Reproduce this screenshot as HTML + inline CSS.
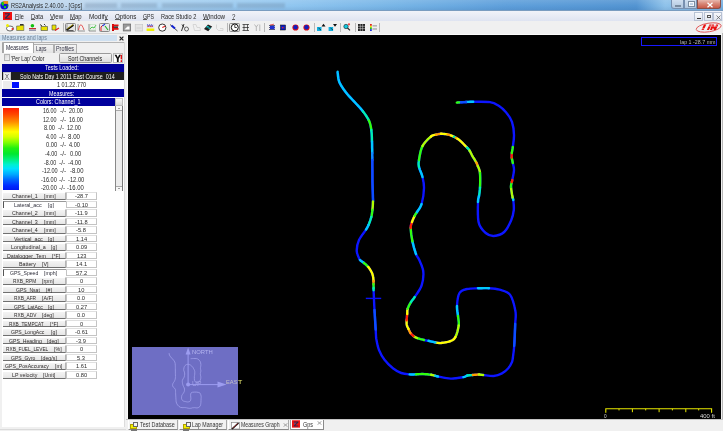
<!DOCTYPE html>
<html><head><meta charset="utf-8">
<style>
*{margin:0;padding:0;box-sizing:border-box}
html,body{width:723px;height:431px;overflow:hidden;background:#f0f0f0;font-family:"Liberation Sans",sans-serif;font-size:6.5px;color:#000;position:relative}
.a{position:absolute}
.t{position:absolute;white-space:nowrap;line-height:1}
#title{left:0;top:0;width:723px;height:11px;background:linear-gradient(rgba(255,255,255,.12),rgba(255,255,255,0) 60%,rgba(0,30,80,.08)),linear-gradient(90deg,#c2d6ea 0%,#bcd6ee 11%,#acd2f0 20%,#90c6f0 40%,#76b4e6 55%,#5e9fdb 70%,#5294d2 88%,#8ec2ea 92%,#7ab2e2 100%);border-bottom:1px solid #7a9cc0}
#menu{left:0;top:11px;width:723px;height:10px;background:linear-gradient(#f1f3f9,#dfe4f1)}
#tool{left:0;top:21px;width:723px;height:14px;background:#f0f0f0}
#black{left:128px;top:35px;width:593px;height:384px;background:#000}
.mi{top:12.5px;font-size:7px;color:#333;letter-spacing:-0.1px}
.ic{position:absolute;top:24px;width:8px;height:7px}
.sep{position:absolute;top:23px;width:1px;height:9px;background:#a0a0a0;border-right:1px solid #fff}
.press{position:absolute;top:23px;height:9px;border:1px solid #888;border-radius:1px;background:#e4e4e4}
.lab{position:absolute;left:3px;width:63px;height:7.5px;background:#ececec;border-bottom:1px solid #777;border-right:1px solid #aaa;border-top:1px solid #fff}
.val{position:absolute;left:66px;width:31px;height:7.5px;background:#fff;border:1px solid #bdbdbd;border-top:0}
.lt{position:absolute;font-size:6px;color:#222;letter-spacing:-0.15px;line-height:1;white-space:nowrap}
.lg{position:absolute;font-size:6px;color:#222;letter-spacing:-0.15px;line-height:1;white-space:nowrap}
</style></head><body>
<div id="title" class="a"></div>
<svg class="a" style="left:0;top:0" width="10" height="11" viewBox="0 0 10 11"><circle cx="4.3" cy="5.4" r="4" fill="#0a10d8"/><rect x="3" y="1.1" width="5.1" height="2.8" fill="#f08a10"/><path d="M1 3.5l1.5-1.8 1.2.5.3 2.5-1 1.5z" fill="#10d010"/><circle cx="5" cy="7.1" r="1.2" fill="#10e010"/><path d="M7 4.5h1.2v2h-1.2z" fill="#109020"/></svg>
<div class="a" style="left:85px;top:3px;width:32px;height:5px;background:rgba(110,130,155,.3);filter:blur(1px)"></div>
<div class="a" style="left:121px;top:3px;width:36px;height:5px;background:rgba(110,130,155,.3);filter:blur(1px)"></div>
<div class="a" style="left:162px;top:3px;width:71px;height:5px;background:rgba(110,130,155,.3);filter:blur(1px)"></div>
<div class="a" style="left:237px;top:3px;width:48px;height:5px;background:rgba(110,130,155,.3);filter:blur(1px)"></div>
<div class="a" style="left:671px;top:0;width:13px;height:9px;background:linear-gradient(#d0dff0,#b0c6de);border:1px solid #7890b0;border-top:0;border-radius:0 0 0 3px"><div class="a" style="left:3px;top:4.5px;width:6px;height:2px;background:#f4f8fc;border:0.5px solid #7a8ca0"></div></div>
<div class="a" style="left:684px;top:0;width:13px;height:9px;background:linear-gradient(#d0dff0,#b0c6de);border:1px solid #7890b0;border-top:0"><div class="a" style="left:3.5px;top:1.5px;width:5px;height:4.5px;border:1px solid #f4f8fc;outline:0.5px solid #7a8ca0"></div></div>
<div class="a" style="left:697px;top:0;width:24px;height:9px;background:linear-gradient(#e8b8ae,#d88878 45%,#c85a48);border:1px solid #8a5048;border-top:0;border-radius:0 0 3px 0"><svg class="a" style="left:7.5px;top:1.5px" width="8" height="6" viewBox="0 0 8 6"><path d="M1.5 .7L6.5 5.3M6.5 .7L1.5 5.3" stroke="#fff" stroke-width="1.2"/></svg></div>

<div id="menu" class="a"></div>
<svg class="a" style="left:3px;top:11.5px" width="9" height="8" viewBox="0 0 9 8"><rect width="9" height="8" fill="#f01010"/><path d="M2 1.8h5M1.8 6.2h5M6.5 2L2.5 6" stroke="#2a2a50" stroke-width="1.1" fill="none"/><circle cx="3" cy="3.5" r=".8" fill="#3a5a9a"/></svg>
<div class="a" style="left:694px;top:12px;width:9px;height:8.5px;background:linear-gradient(#f8f9fc,#e0e5ef);border:1px solid #b8c2d4"><div class="a" style="left:2px;top:5px;width:4px;height:1px;background:#333"></div></div>
<div class="a" style="left:703.5px;top:12px;width:9px;height:8.5px;background:linear-gradient(#f8f9fc,#e0e5ef);border:1px solid #b8c2d4"><div class="a" style="left:2.5px;top:1.5px;width:4px;height:3.5px;border:1px solid #555"></div></div>
<div class="a" style="left:713px;top:12px;width:9px;height:8.5px;background:linear-gradient(#f8f9fc,#e0e5ef);border:1px solid #b8c2d4"><svg class="a" style="left:1.5px;top:1.5px" width="5" height="5" viewBox="0 0 5 5"><path d="M.5 .5L4.5 4.5M4.5 .5L.5 4.5" stroke="#555" stroke-width=".7"/></svg></div>

<div class="a" style="left:15.0px;top:19px;width:3.8px;height:0.9px;background:#606060"></div><div class="a" style="left:31.0px;top:19px;width:4.2px;height:0.9px;background:#606060"></div><div class="a" style="left:49.8px;top:19px;width:4.4px;height:0.9px;background:#606060"></div><div class="a" style="left:70.0px;top:19px;width:5.2px;height:0.9px;background:#606060"></div><div class="a" style="left:104.5px;top:19px;width:3.0px;height:0.9px;background:#606060"></div><div class="a" style="left:115.0px;top:19px;width:5.0px;height:0.9px;background:#606060"></div><div class="a" style="left:142.8px;top:19px;width:4.4px;height:0.9px;background:#606060"></div><div class="a" style="left:203.3px;top:19px;width:6.2px;height:0.9px;background:#606060"></div><div class="a" style="left:232.0px;top:19px;width:3.4px;height:0.9px;background:#606060"></div>
<div id="tool" class="a"></div>
<div class="a" style="left:64.7px;top:23.0px;width:11.1px;height:9.0px;border:1px solid #8a8a8a;border-radius:1.5px;background:linear-gradient(#ececec,#e2e2e2)"></div>
<div class="a" style="left:99.3px;top:23.0px;width:10.5px;height:9.0px;border:1px solid #8a8a8a;border-radius:1.5px;background:linear-gradient(#ececec,#e2e2e2)"></div>
<div class="a" style="left:229.3px;top:23.0px;width:11.1px;height:9.0px;border:1px solid #8a8a8a;border-radius:1.5px;background:linear-gradient(#ececec,#e2e2e2)"></div>
<div class="a" style="left:62.5px;top:23.0px;width:1.0px;height:9.0px;background:#b8b8b8"></div>
<div class="a" style="left:227.4px;top:23.0px;width:1.0px;height:9.0px;background:#b8b8b8"></div>
<div class="a" style="left:264.0px;top:23.0px;width:1.0px;height:9.0px;background:#b8b8b8"></div>
<div class="a" style="left:314.0px;top:23.0px;width:1.0px;height:9.0px;background:#b8b8b8"></div>
<div class="a" style="left:340.4px;top:23.0px;width:1.0px;height:9.0px;background:#b8b8b8"></div>
<div class="a" style="left:354.5px;top:23.0px;width:1.0px;height:9.0px;background:#b8b8b8"></div>
<div class="a" style="left:379.4px;top:23.0px;width:1.0px;height:9.0px;background:#b8b8b8"></div>
<svg class="a" style="left:0;top:0" width="400" height="36" viewBox="0 0 400 36"><ellipse cx="10" cy="28.5" rx="3.5" ry="2.5" fill="#fff" stroke="#444" stroke-width=".8"/><circle cx="7.5" cy="25.5" r="1.5" fill="#ee0"/><circle cx="12.5" cy="29" r="1" fill="#e22"/><path d="M16.6 26h3l1-1h3.2v5.5h-7.2z" fill="#e8e000" stroke="#555" stroke-width=".6"/><rect x="20" y="24" width="3.5" height="1.5" fill="#333"/><circle cx="32.4" cy="25.8" r="1.8" fill="#10c010"/><rect x="29" y="28" width="7" height="1.2" fill="#c03030"/><rect x="29" y="29.6" width="7" height="1.2" fill="#8080a0"/><path d="M41 26.5h6.5v4h-6.5z" fill="#e8e000" stroke="#444" stroke-width=".6"/><path d="M40 24.5l2 1.5M44 24l1.5 1.5" stroke="#222" stroke-width=".9"/><path d="M52 25h4v5h-4z" fill="#e8e000" stroke="#444" stroke-width=".6"/><path d="M55 30.5l4-2.5" stroke="#e02020" stroke-width="1.2"/><path d="M66.5 30l7-5" stroke="#000" stroke-width="1.6"/><path d="M67 29l6-4.5" stroke="#e8d000" stroke-width=".7"/><path d="M66.5 30.5h7" stroke="#222" stroke-width=".7"/><path d="M67 24v6" stroke="#555" stroke-width=".5"/><path d="M78 31h7M78 24v7" stroke="#555" stroke-width=".6"/><path d="M78.5 30c1.5-7 3-7 5.5 0" fill="none" stroke="#e03030" stroke-width=".8"/><path d="M89 31h7M89 24v7" stroke="#555" stroke-width=".6"/><path d="M90 29l2-2 2 1 2-3" fill="none" stroke="#30c030" stroke-width=".9"/><rect x="90" y="24.5" width="5.5" height="5.5" fill="none" stroke="#a0d0a0" stroke-width=".4"/><path d="M101 31v-4l2-2" stroke="#e02020" stroke-width="1" fill="none"/><path d="M102.5 26l2.5-2" stroke="#2040e0" stroke-width="1.1"/><path d="M105 26l3 4" stroke="#20b020" stroke-width="1.1"/><rect x="112" y="24" width="2" height="7" fill="#c00"/><rect x="112" y="24.5" width="6.5" height="1.8" fill="#e01010"/><rect x="112" y="28" width="6.5" height="1.8" fill="#e01010"/><rect x="114" y="26.3" width="4" height="1.7" fill="#404040"/><rect x="123.2" y="24" width="7.5" height="7" fill="#9a9a9a" stroke="#606060" stroke-width=".6"/><path d="M124.5 29.5h5v-3h-2z" fill="#fff"/><rect x="135.2" y="24.5" width="7.5" height="6.5" fill="#e4e4e4" stroke="#c4c4c4" stroke-width=".6"/><path d="M136.5 28h5" stroke="#ccc" stroke-width=".8"/><rect x="146.6" y="24" width="7.7" height="4" fill="#e0e0f0"/><path d="M147 24.5h1v1h-1zM149 24.5h1v1h-1zM151 24.5h1v1h-1zM148 25.5h1v1h-1zM150 25.5h1v1h-1zM152 25.5h1v1h-1z" fill="#2030c0"/><path d="M147 26.8l2 -.8 2 .8 2-.8" stroke="#e02020" stroke-width=".6" fill="none"/><rect x="146.6" y="28.5" width="7.7" height="2.5" fill="#f0f000"/><circle cx="162.3" cy="27.6" r="3.6" fill="#fff" stroke="#222" stroke-width=".9"/><path d="M162.3 27.6l2.8-1.3" stroke="#e02020" stroke-width="1.1"/><path d="M170 24.5l7.5 6.5" stroke="#222" stroke-width=".8"/><path d="M171.5 25.5l3.5 3" stroke="#1020d0" stroke-width="2"/><path d="M182 24.5l2 3M184 24l-1.5 4M182.5 28l-1 3" stroke="#222" stroke-width=".9"/><circle cx="186.5" cy="29" r="2" fill="none" stroke="#555" stroke-width=".9"/><path d="M193 24.5h3l1 3h3l.5 3h-6z" fill="none" stroke="#cfcfcf" stroke-width=".8"/><path d="M204 29l4-4.5 4.2 2-4 4.8z" fill="#202020"/><rect x="206.5" y="26" width="2.2" height="1.6" fill="#10c0c0"/><rect x="208.5" y="27.5" width="2" height="1.4" fill="#10c0c0"/><path d="M216.5 24.5v4l2 2h4.5v-2h-3" fill="none" stroke="#cfcfcf" stroke-width=".8"/><circle cx="234.8" cy="27.5" r="3.5" fill="#fff" stroke="#111" stroke-width="1"/><path d="M234.8 25v2.5h2" stroke="#111" stroke-width=".8" fill="none"/><path d="M242.5 24.5h6.5M242.5 30.5h6.5M244 24.5v6M247.5 24.5v6M242.5 27.5h6.5" stroke="#222" stroke-width=".7"/><path d="M254.5 24.5l1.8 2.5 1.8-2.5M256.3 27v4M259.8 24.5v6.5" stroke="#b0b0b0" stroke-width=".9" fill="none"/><path d="M269 25.5h6M269 27.5h6M269 29.5h6" stroke="#303060" stroke-width=".8"/><path d="M270 25l4 -.8" stroke="#e02020" stroke-width=".7"/><rect x="270" y="26" width="4.5" height="3" fill="#2030d0"/><rect x="280.5" y="25" width="5" height="5" fill="#1020c0" stroke="#000" stroke-width=".5"/><rect x="282" y="27" width="1.5" height="1.3" fill="#e02020"/><circle cx="295.5" cy="27.5" r="3.1" fill="#e01010"/><circle cx="295.5" cy="27.2" r="2.2" fill="#1020c0"/><circle cx="306.5" cy="27.5" r="3.1" fill="#e01010"/><circle cx="306.5" cy="27.2" r="2.2" fill="#1020c0"/><rect x="317" y="27" width="4.5" height="4" fill="#10b0e0"/><path d="M321 30l-2.5-2" stroke="#000" stroke-width=".6"/><path d="M321.5 26.5l2-2.8 2 2.8z" fill="#111"/><rect x="328.6" y="27" width="4.5" height="4" fill="#10b0e0"/><path d="M333 30l-2.5-2" stroke="#000" stroke-width=".6"/><path d="M333 24h4l-2 2.8z" fill="#111"/><circle cx="346" cy="26.5" r="2.2" fill="#10c8e0" stroke="#222" stroke-width=".6"/><path d="M347.5 28l2.5 2.3" stroke="#222" stroke-width="1.1"/><circle cx="349" cy="24.3" r="1.1" fill="#f04040"/><rect x="358" y="24" width="7" height="7" fill="#222"/><path d="M360.3 24v7M362.6 24v7M358 26.3h7M358 28.6h7" stroke="#ddd" stroke-width=".5"/><rect x="370" y="24" width="1.8" height="1.8" fill="#e02020"/><rect x="370" y="25.8" width="1.8" height="1.8" fill="#f0e000"/><rect x="370" y="27.4" width="1.8" height="1.8" fill="#20c020"/><rect x="370" y="29.2" width="1.8" height="1.8" fill="#2030e0"/><rect x="372.5" y="25" width="4.5" height="1.6" fill="#b4b4b4"/><rect x="372.5" y="28.2" width="4.5" height="1.6" fill="#b4b4b4"/></svg>
<!-- AIM logo -->
<svg class="a" style="left:690px;top:20px" width="33" height="16" viewBox="0 0 33 16">
<ellipse cx="18.7" cy="7.5" rx="12.6" ry="4.3" transform="rotate(-9 18.7 7.5)" fill="none" stroke="#e05050" stroke-width=".9"/>
<path d="M11.5 10h2.2l2.6-5.5h-2.4zM16.8 10h2.2l2.6-5.5h-2.2zM20 10h2l1-2.2 1 2.2 1.8-.1 2.6-5.4h-2.3l-1.3 2.8-.9-2.8h-2z" fill="#e81010"/>
<path d="M12 8.7h5M17 6h10" stroke="#fff" stroke-width=".5"/>
</svg>

<!-- left panel -->
<div class="a" style="left:0;top:33px;width:127px;height:1px;background:#d8d8d8"></div>
<div class="a" style="left:0;top:35px;width:117px;height:6px;background:#cfe0f0"></div>
<svg class="a" style="left:119px;top:36px" width="5" height="5" viewBox="0 0 5 5"><path d="M.6 .6L4.4 4.4M4.4 .6L.6 4.4" stroke="#222" stroke-width="1.2"/></svg>
<div class="a" style="left:1.5px;top:42px;width:1px;height:385px;background:#a4a4a4"></div><div class="a" style="left:0;top:428.5px;width:126px;height:1px;background:#dadada"></div>
<div class="a" style="left:2px;top:42px;width:122px;height:1px;background:#b4b4b4"></div>
<div class="a" style="left:123.5px;top:42px;width:1px;height:385px;background:#dcdcdc"></div>
<div class="a" style="left:126.5px;top:35px;width:1.5px;height:384px;background:#fafafa"></div>
<!-- tabs -->
<div class="a" style="left:2.5px;top:42px;width:31px;height:11px;background:#fff;border:1px solid #a8a8a8;border-bottom:0"></div>
<div class="a" style="left:33.5px;top:44px;width:20px;height:9px;background:linear-gradient(#f4f4f4,#e2e2e2);border:1px solid #b0b0b0;border-bottom:0;border-left:0"></div>
<div class="a" style="left:53.5px;top:44px;width:23px;height:9px;background:linear-gradient(#f4f4f4,#e2e2e2);border:1px solid #b0b0b0;border-bottom:0"></div>
<div class="a" style="left:2px;top:53px;width:121.5px;height:374px;background:#fff"></div>
<div class="a" style="left:2px;top:53px;width:121.5px;height:10.5px;background:#f0f0f0"></div>
<div class="a" style="left:3.5px;top:54.2px;width:6.5px;height:6.8px;background:linear-gradient(135deg,#d8d8d8,#f4f4f4);border:1px solid #b4b4b4"></div>
<div class="a" style="left:58.5px;top:53.3px;width:53.5px;height:9.3px;background:linear-gradient(#f4f4f4,#dedede);border:1px solid #9a9a9a;border-radius:1.5px"></div>
<div class="a" style="left:113px;top:53.3px;width:9.5px;height:9.3px;background:#fff;border:1px solid #bbb"></div>
<svg class="a" style="left:113px;top:53px" width="10" height="10" viewBox="0 0 10 10"><path d="M1.5 1.8h2l1.3 2.6 1.3-2.6h1.9l-2.3 4v3.2h-1.8v-3.2z" fill="#111"/><rect x="7.6" y="1.8" width="1.4" height="4.6" fill="#e01010"/><rect x="7.6" y="7.2" width="1.4" height="1.8" fill="#e01010"/></svg>
<div class="a" style="left:2px;top:63.5px;width:121.5px;height:8.3px;background:#00009c"></div>
<div class="a" style="left:2px;top:71.8px;width:121.5px;height:8.7px;background:#1e1e1e"></div>
<div class="a" style="left:2.5px;top:72.3px;width:8.3px;height:8px;background:#f0f0f0;border:0.5px solid #c8c8c8"></div>
<div class="a" style="left:2.5px;top:81px;width:9px;height:7.5px;background:#ececec"></div>
<div class="a" style="left:11.8px;top:81.7px;width:7px;height:6.3px;background:#0010ff"></div>
<div class="a" style="left:2px;top:89.2px;width:121.5px;height:8.3px;background:#00009c"></div>
<div class="a" style="left:2px;top:97.5px;width:113px;height:8.4px;background:#00009c"></div>
<div class="a" style="left:115px;top:98px;width:7.5px;height:7.5px;background:linear-gradient(#f8f8f8,#d8d8d8);border:1px solid #bbb"></div>
<!-- scrollbar -->
<div class="a" style="left:115px;top:106px;width:8.3px;height:85px;background:#ececec;border-left:1px solid #888;border-right:1.5px solid #777"></div>
<div class="a" style="left:116px;top:106px;width:6px;height:4.5px;background:#f8f8f8;border-bottom:1px solid #aaa"></div>
<div class="a" style="left:118px;top:107.5px;width:0;height:0;border-left:1.3px solid transparent;border-right:1.3px solid transparent;border-top:1.5px solid #444"></div>
<div class="a" style="left:116px;top:185.5px;width:6px;height:5.5px;background:#f8f8f8;border-top:1px solid #aaa"></div>
<div class="a" style="left:118px;top:187.5px;width:0;height:0;border-left:1.3px solid transparent;border-right:1.3px solid transparent;border-bottom:1.5px solid #444"></div>
<!-- color bar -->
<div class="a" style="left:3.2px;top:107.5px;width:15.6px;height:82.5px;background:linear-gradient(#ff1800 0%,#ff4800 8%,#ff8c00 17%,#ffd000 24%,#ffff00 29%,#d8ff00 35%,#80ff00 42%,#20f010 49%,#00e830 56%,#00f080 63%,#00f0d0 69%,#00e0ff 74%,#00a8ff 81%,#0060ff 88%,#0028ff 95%,#0018f0 100%)"></div>
<div class="a" style="left:3px;top:192.00px;width:62.5px;height:7.6px;background:linear-gradient(#f4f4f4,#e6e6e6);border-bottom:1px solid #707070;border-right:1px solid #b4b4b4;border-top:0.5px solid #fff"></div>
<div class="a" style="left:65.8px;top:192.00px;width:31px;height:7.6px;background:#fff;border:1px solid #c4c4c4;border-top-color:#e0e0e0"></div>
<div id="rn0" class="t" style="left:12.21px;top:193.01px;font-size:6px;color:#2e2a2a;transform:scaleX(0.887);transform-origin:0 0">Channel_1</div>
<div id="ru0" class="t" style="left:43.85px;top:193.01px;font-size:6px;color:#2e2a2a;transform:scaleX(0.880);transform-origin:0 0">[mm]</div>
<div id="rv0" class="t" style="left:74.80px;top:193.01px;font-size:6px;color:#2a2a2a;transform:scaleX(0.950);transform-origin:0 0">-28.7</div>
<div class="a" style="left:3px;top:200.52px;width:62.5px;height:7.5px;background:#fff;border-left:1px solid #555;border-top:1px solid #999"></div>
<div class="a" style="left:65.8px;top:200.52px;width:31px;height:7.6px;background:#fff;border:1px solid #c4c4c4;border-top-color:#e0e0e0"></div>
<div id="rn1" class="t" style="left:14.22px;top:201.53px;font-size:6px;color:#2e2e3a;transform:scaleX(0.889);transform-origin:0 0">Lateral_acc</div>
<div id="ru1" class="t" style="left:47.71px;top:201.53px;font-size:6px;color:#2e2e3a;transform:scaleX(0.880);transform-origin:0 0">[g]</div>
<div id="rv1" class="t" style="left:74.80px;top:201.53px;font-size:6px;color:#2a2a2a;transform:scaleX(0.950);transform-origin:0 0">-0.10</div>
<div class="a" style="left:3px;top:209.04px;width:62.5px;height:7.6px;background:linear-gradient(#f4f4f4,#e6e6e6);border-bottom:1px solid #707070;border-right:1px solid #b4b4b4;border-top:0.5px solid #fff"></div>
<div class="a" style="left:65.8px;top:209.04px;width:31px;height:7.6px;background:#fff;border:1px solid #c4c4c4;border-top-color:#e0e0e0"></div>
<div id="rn2" class="t" style="left:12.21px;top:210.05px;font-size:6px;color:#2e2a2a;transform:scaleX(0.887);transform-origin:0 0">Channel_2</div>
<div id="ru2" class="t" style="left:43.85px;top:210.05px;font-size:6px;color:#2e2a2a;transform:scaleX(0.880);transform-origin:0 0">[mm]</div>
<div id="rv2" class="t" style="left:75.01px;top:210.05px;font-size:6px;color:#2a2a2a;transform:scaleX(0.950);transform-origin:0 0">-11.9</div>
<div class="a" style="left:3px;top:217.56px;width:62.5px;height:7.6px;background:linear-gradient(#f4f4f4,#e6e6e6);border-bottom:1px solid #707070;border-right:1px solid #b4b4b4;border-top:0.5px solid #fff"></div>
<div class="a" style="left:65.8px;top:217.56px;width:31px;height:7.6px;background:#fff;border:1px solid #c4c4c4;border-top-color:#e0e0e0"></div>
<div id="rn3" class="t" style="left:12.21px;top:218.57px;font-size:6px;color:#2e2a2a;transform:scaleX(0.887);transform-origin:0 0">Channel_3</div>
<div id="ru3" class="t" style="left:43.85px;top:218.57px;font-size:6px;color:#2e2a2a;transform:scaleX(0.880);transform-origin:0 0">[mm]</div>
<div id="rv3" class="t" style="left:75.01px;top:218.57px;font-size:6px;color:#2a2a2a;transform:scaleX(0.950);transform-origin:0 0">-11.8</div>
<div class="a" style="left:3px;top:226.08px;width:62.5px;height:7.6px;background:linear-gradient(#f4f4f4,#e6e6e6);border-bottom:1px solid #707070;border-right:1px solid #b4b4b4;border-top:0.5px solid #fff"></div>
<div class="a" style="left:65.8px;top:226.08px;width:31px;height:7.6px;background:#fff;border:1px solid #c4c4c4;border-top-color:#e0e0e0"></div>
<div id="rn4" class="t" style="left:12.21px;top:227.09px;font-size:6px;color:#2e2a2a;transform:scaleX(0.887);transform-origin:0 0">Channel_4</div>
<div id="ru4" class="t" style="left:43.85px;top:227.09px;font-size:6px;color:#2e2a2a;transform:scaleX(0.880);transform-origin:0 0">[mm]</div>
<div id="rv4" class="t" style="left:76.39px;top:227.09px;font-size:6px;color:#2a2a2a;transform:scaleX(0.950);transform-origin:0 0">-5.8</div>
<div class="a" style="left:3px;top:234.60px;width:62.5px;height:7.6px;background:linear-gradient(#f4f4f4,#e6e6e6);border-bottom:1px solid #707070;border-right:1px solid #b4b4b4;border-top:0.5px solid #fff"></div>
<div class="a" style="left:65.8px;top:234.60px;width:31px;height:7.6px;background:#fff;border:1px solid #c4c4c4;border-top-color:#e0e0e0"></div>
<div id="rn5" class="t" style="left:13.61px;top:235.61px;font-size:6px;color:#2e2a2a;transform:scaleX(0.890);transform-origin:0 0">Vertical_acc</div>
<div id="ru5" class="t" style="left:48.31px;top:235.61px;font-size:6px;color:#2e2a2a;transform:scaleX(0.880);transform-origin:0 0">[g]</div>
<div id="rv5" class="t" style="left:75.75px;top:235.61px;font-size:6px;color:#2a2a2a;transform:scaleX(0.950);transform-origin:0 0">1.14</div>
<div class="a" style="left:3px;top:243.12px;width:62.5px;height:7.6px;background:linear-gradient(#f4f4f4,#e6e6e6);border-bottom:1px solid #707070;border-right:1px solid #b4b4b4;border-top:0.5px solid #fff"></div>
<div class="a" style="left:65.8px;top:243.12px;width:31px;height:7.6px;background:#fff;border:1px solid #c4c4c4;border-top-color:#e0e0e0"></div>
<div id="rn6" class="t" style="left:10.61px;top:244.13px;font-size:6px;color:#2e2a2a;transform:scaleX(0.891);transform-origin:0 0">Longitudinal_a</div>
<div id="ru6" class="t" style="left:51.32px;top:244.13px;font-size:6px;color:#2e2a2a;transform:scaleX(0.880);transform-origin:0 0">[g]</div>
<div id="rv6" class="t" style="left:75.75px;top:244.13px;font-size:6px;color:#2a2a2a;transform:scaleX(0.950);transform-origin:0 0">0.09</div>
<div class="a" style="left:3px;top:251.64px;width:62.5px;height:7.6px;background:linear-gradient(#f4f4f4,#e6e6e6);border-bottom:1px solid #707070;border-right:1px solid #b4b4b4;border-top:0.5px solid #fff"></div>
<div class="a" style="left:65.8px;top:251.64px;width:31px;height:7.6px;background:#fff;border:1px solid #c4c4c4;border-top-color:#e0e0e0"></div>
<div id="rn7" class="t" style="left:7.37px;top:252.65px;font-size:6px;color:#2e2a2a;transform:scaleX(0.883);transform-origin:0 0">Datalogger_Tem</div>
<div id="ru7" class="t" style="left:52.15px;top:252.65px;font-size:6px;color:#2e2a2a;transform:scaleX(0.880);transform-origin:0 0">[°F]</div>
<div id="rv7" class="t" style="left:76.54px;top:252.65px;font-size:6px;color:#2a2a2a;transform:scaleX(0.950);transform-origin:0 0">123</div>
<div class="a" style="left:3px;top:260.16px;width:62.5px;height:7.6px;background:linear-gradient(#f4f4f4,#e6e6e6);border-bottom:1px solid #707070;border-right:1px solid #b4b4b4;border-top:0.5px solid #fff"></div>
<div class="a" style="left:65.8px;top:260.16px;width:31px;height:7.6px;background:#fff;border:1px solid #c4c4c4;border-top-color:#e0e0e0"></div>
<div id="rn8" class="t" style="left:19.32px;top:261.17px;font-size:6px;color:#2e2a2a;transform:scaleX(0.883);transform-origin:0 0">Battery</div>
<div id="ru8" class="t" style="left:42.01px;top:261.17px;font-size:6px;color:#2e2a2a;transform:scaleX(0.880);transform-origin:0 0">[V]</div>
<div id="rv8" class="t" style="left:75.75px;top:261.17px;font-size:6px;color:#2a2a2a;transform:scaleX(0.950);transform-origin:0 0">14.1</div>
<div class="a" style="left:3px;top:268.68px;width:62.5px;height:7.5px;background:#fff;border-left:1px solid #555;border-top:1px solid #999"></div>
<div class="a" style="left:65.8px;top:268.68px;width:31px;height:7.6px;background:#fff;border:1px solid #c4c4c4;border-top-color:#e0e0e0"></div>
<div id="rn9" class="t" style="left:10.22px;top:269.69px;font-size:6px;color:#2e2e3a;transform:scaleX(0.847);transform-origin:0 0">GPS_Speed</div>
<div id="ru9" class="t" style="left:44.37px;top:269.69px;font-size:6px;color:#2e2e3a;transform:scaleX(0.880);transform-origin:0 0">[mph]</div>
<div id="rv9" class="t" style="left:75.75px;top:269.69px;font-size:6px;color:#2a2a2a;transform:scaleX(0.950);transform-origin:0 0">57.2</div>
<div class="a" style="left:3px;top:277.20px;width:62.5px;height:7.6px;background:linear-gradient(#f4f4f4,#e6e6e6);border-bottom:1px solid #707070;border-right:1px solid #b4b4b4;border-top:0.5px solid #fff"></div>
<div class="a" style="left:65.8px;top:277.20px;width:31px;height:7.6px;background:#fff;border:1px solid #c4c4c4;border-top-color:#e0e0e0"></div>
<div id="rn10" class="t" style="left:13.37px;top:278.21px;font-size:6px;color:#2e2a2a;transform:scaleX(0.797);transform-origin:0 0">RXB_RPM</div>
<div id="ru10" class="t" style="left:42.40px;top:278.21px;font-size:6px;color:#2e2a2a;transform:scaleX(0.880);transform-origin:0 0">[rpm]</div>
<div id="rv10" class="t" style="left:79.71px;top:278.21px;font-size:6px;color:#2a2a2a;transform:scaleX(0.950);transform-origin:0 0">0</div>
<div class="a" style="left:3px;top:285.72px;width:62.5px;height:7.6px;background:linear-gradient(#f4f4f4,#e6e6e6);border-bottom:1px solid #707070;border-right:1px solid #b4b4b4;border-top:0.5px solid #fff"></div>
<div class="a" style="left:65.8px;top:285.72px;width:31px;height:7.6px;background:#fff;border:1px solid #c4c4c4;border-top-color:#e0e0e0"></div>
<div id="rn11" class="t" style="left:16.10px;top:286.73px;font-size:6px;color:#2e2a2a;transform:scaleX(0.840);transform-origin:0 0">GPS_Nsat</div>
<div id="ru11" class="t" style="left:45.83px;top:286.73px;font-size:6px;color:#2e2a2a;transform:scaleX(0.880);transform-origin:0 0">[#]</div>
<div id="rv11" class="t" style="left:78.12px;top:286.73px;font-size:6px;color:#2a2a2a;transform:scaleX(0.950);transform-origin:0 0">10</div>
<div class="a" style="left:3px;top:294.24px;width:62.5px;height:7.6px;background:linear-gradient(#f4f4f4,#e6e6e6);border-bottom:1px solid #707070;border-right:1px solid #b4b4b4;border-top:0.5px solid #fff"></div>
<div class="a" style="left:65.8px;top:294.24px;width:31px;height:7.6px;background:#fff;border:1px solid #c4c4c4;border-top-color:#e0e0e0"></div>
<div id="rn12" class="t" style="left:14.34px;top:295.25px;font-size:6px;color:#2e2a2a;transform:scaleX(0.797);transform-origin:0 0">RXB_AFR</div>
<div id="ru12" class="t" style="left:42.31px;top:295.25px;font-size:6px;color:#2e2a2a;transform:scaleX(0.880);transform-origin:0 0">[A/F]</div>
<div id="rv12" class="t" style="left:77.34px;top:295.25px;font-size:6px;color:#2a2a2a;transform:scaleX(0.950);transform-origin:0 0">0.0</div>
<div class="a" style="left:3px;top:302.76px;width:62.5px;height:7.6px;background:linear-gradient(#f4f4f4,#e6e6e6);border-bottom:1px solid #707070;border-right:1px solid #b4b4b4;border-top:0.5px solid #fff"></div>
<div class="a" style="left:65.8px;top:302.76px;width:31px;height:7.6px;background:#fff;border:1px solid #c4c4c4;border-top-color:#e0e0e0"></div>
<div id="rn13" class="t" style="left:13.58px;top:303.77px;font-size:6px;color:#2e2a2a;transform:scaleX(0.840);transform-origin:0 0">GPS_LatAcc</div>
<div id="ru13" class="t" style="left:48.35px;top:303.77px;font-size:6px;color:#2e2a2a;transform:scaleX(0.880);transform-origin:0 0">[g]</div>
<div id="rv13" class="t" style="left:75.75px;top:303.77px;font-size:6px;color:#2a2a2a;transform:scaleX(0.950);transform-origin:0 0">0.27</div>
<div class="a" style="left:3px;top:311.28px;width:62.5px;height:7.6px;background:linear-gradient(#f4f4f4,#e6e6e6);border-bottom:1px solid #707070;border-right:1px solid #b4b4b4;border-top:0.5px solid #fff"></div>
<div class="a" style="left:65.8px;top:311.28px;width:31px;height:7.6px;background:#fff;border:1px solid #c4c4c4;border-top-color:#e0e0e0"></div>
<div id="rn14" class="t" style="left:13.91px;top:312.29px;font-size:6px;color:#2e2a2a;transform:scaleX(0.797);transform-origin:0 0">RXB_ADV</div>
<div id="ru14" class="t" style="left:42.14px;top:312.29px;font-size:6px;color:#2e2a2a;transform:scaleX(0.880);transform-origin:0 0">[deg]</div>
<div id="rv14" class="t" style="left:77.34px;top:312.29px;font-size:6px;color:#2a2a2a;transform:scaleX(0.950);transform-origin:0 0">0.0</div>
<div class="a" style="left:3px;top:319.80px;width:62.5px;height:7.6px;background:linear-gradient(#f4f4f4,#e6e6e6);border-bottom:1px solid #707070;border-right:1px solid #b4b4b4;border-top:0.5px solid #fff"></div>
<div class="a" style="left:65.8px;top:319.80px;width:31px;height:7.6px;background:#fff;border:1px solid #c4c4c4;border-top-color:#e0e0e0"></div>
<div id="rn15" class="t" style="left:9.45px;top:320.81px;font-size:6px;color:#2e2a2a;transform:scaleX(0.791);transform-origin:0 0">RXB_TEMPCAT</div>
<div id="ru15" class="t" style="left:50.07px;top:320.81px;font-size:6px;color:#2e2a2a;transform:scaleX(0.880);transform-origin:0 0">[°F]</div>
<div id="rv15" class="t" style="left:79.71px;top:320.81px;font-size:6px;color:#2a2a2a;transform:scaleX(0.950);transform-origin:0 0">0</div>
<div class="a" style="left:3px;top:328.32px;width:62.5px;height:7.6px;background:linear-gradient(#f4f4f4,#e6e6e6);border-bottom:1px solid #707070;border-right:1px solid #b4b4b4;border-top:0.5px solid #fff"></div>
<div class="a" style="left:65.8px;top:328.32px;width:31px;height:7.6px;background:#fff;border:1px solid #c4c4c4;border-top-color:#e0e0e0"></div>
<div id="rn16" class="t" style="left:11.38px;top:329.33px;font-size:6px;color:#2e2a2a;transform:scaleX(0.845);transform-origin:0 0">GPS_LongAcc</div>
<div id="ru16" class="t" style="left:50.55px;top:329.33px;font-size:6px;color:#2e2a2a;transform:scaleX(0.880);transform-origin:0 0">[g]</div>
<div id="rv16" class="t" style="left:74.80px;top:329.33px;font-size:6px;color:#2a2a2a;transform:scaleX(0.950);transform-origin:0 0">-0.61</div>
<div class="a" style="left:3px;top:336.84px;width:62.5px;height:7.6px;background:linear-gradient(#f4f4f4,#e6e6e6);border-bottom:1px solid #707070;border-right:1px solid #b4b4b4;border-top:0.5px solid #fff"></div>
<div class="a" style="left:65.8px;top:336.84px;width:31px;height:7.6px;background:#fff;border:1px solid #c4c4c4;border-top-color:#e0e0e0"></div>
<div id="rn17" class="t" style="left:8.65px;top:337.85px;font-size:6px;color:#2e2a2a;transform:scaleX(0.856);transform-origin:0 0">GPS_Heading</div>
<div id="ru17" class="t" style="left:47.40px;top:337.85px;font-size:6px;color:#2e2a2a;transform:scaleX(0.880);transform-origin:0 0">[deg]</div>
<div id="rv17" class="t" style="left:76.39px;top:337.85px;font-size:6px;color:#2a2a2a;transform:scaleX(0.950);transform-origin:0 0">-3.9</div>
<div class="a" style="left:3px;top:345.36px;width:62.5px;height:7.6px;background:linear-gradient(#f4f4f4,#e6e6e6);border-bottom:1px solid #707070;border-right:1px solid #b4b4b4;border-top:0.5px solid #fff"></div>
<div class="a" style="left:65.8px;top:345.36px;width:31px;height:7.6px;background:#fff;border:1px solid #c4c4c4;border-top-color:#e0e0e0"></div>
<div id="rn18" class="t" style="left:6.00px;top:346.37px;font-size:6px;color:#2e2a2a;transform:scaleX(0.797);transform-origin:0 0">RXB_FUEL_LEVEL</div>
<div id="ru18" class="t" style="left:54.17px;top:346.37px;font-size:6px;color:#2e2a2a;transform:scaleX(0.880);transform-origin:0 0">[%]</div>
<div id="rv18" class="t" style="left:79.71px;top:346.37px;font-size:6px;color:#2a2a2a;transform:scaleX(0.950);transform-origin:0 0">0</div>
<div class="a" style="left:3px;top:353.88px;width:62.5px;height:7.6px;background:linear-gradient(#f4f4f4,#e6e6e6);border-bottom:1px solid #707070;border-right:1px solid #b4b4b4;border-top:0.5px solid #fff"></div>
<div class="a" style="left:65.8px;top:353.88px;width:31px;height:7.6px;background:#fff;border:1px solid #c4c4c4;border-top-color:#e0e0e0"></div>
<div id="rn19" class="t" style="left:10.84px;top:354.89px;font-size:6px;color:#2e2a2a;transform:scaleX(0.840);transform-origin:0 0">GPS_Gyro</div>
<div id="ru19" class="t" style="left:41.11px;top:354.89px;font-size:6px;color:#2e2a2a;transform:scaleX(0.880);transform-origin:0 0">[deg/s]</div>
<div id="rv19" class="t" style="left:77.34px;top:354.89px;font-size:6px;color:#2a2a2a;transform:scaleX(0.950);transform-origin:0 0">5.3</div>
<div class="a" style="left:3px;top:362.40px;width:62.5px;height:7.6px;background:linear-gradient(#f4f4f4,#e6e6e6);border-bottom:1px solid #707070;border-right:1px solid #b4b4b4;border-top:0.5px solid #fff"></div>
<div class="a" style="left:65.8px;top:362.40px;width:31px;height:7.6px;background:#fff;border:1px solid #c4c4c4;border-top-color:#e0e0e0"></div>
<div id="rn20" class="t" style="left:5.34px;top:363.41px;font-size:6px;color:#2e2a2a;transform:scaleX(0.860);transform-origin:0 0">GPS_PosAccuracy</div>
<div id="ru20" class="t" style="left:55.12px;top:363.41px;font-size:6px;color:#2e2a2a;transform:scaleX(0.880);transform-origin:0 0">[m]</div>
<div id="rv20" class="t" style="left:75.75px;top:363.41px;font-size:6px;color:#2a2a2a;transform:scaleX(0.950);transform-origin:0 0">1.61</div>
<div class="a" style="left:3px;top:370.92px;width:62.5px;height:7.6px;background:linear-gradient(#f4f4f4,#e6e6e6);border-bottom:1px solid #707070;border-right:1px solid #b4b4b4;border-top:0.5px solid #fff"></div>
<div class="a" style="left:65.8px;top:370.92px;width:31px;height:7.6px;background:#fff;border:1px solid #c4c4c4;border-top-color:#e0e0e0"></div>
<div id="rn21" class="t" style="left:12.09px;top:371.93px;font-size:6px;color:#2e2a2a;transform:scaleX(0.878);transform-origin:0 0">LP velocity</div>
<div id="ru21" class="t" style="left:43.38px;top:371.93px;font-size:6px;color:#2e2a2a;transform:scaleX(0.880);transform-origin:0 0">[Unit]</div>
<div id="rv21" class="t" style="left:75.75px;top:371.93px;font-size:6px;color:#2a2a2a;transform:scaleX(0.950);transform-origin:0 0">0.80</div>

<div class="a" style="left:128px;top:34px;width:595px;height:1px;background:#fbfbfb"></div>
<div id="black" class="a"></div>
<div class="a" style="left:721.5px;top:33px;width:1.5px;height:386px;background:#b8b8b8"></div>
<svg class="a" style="left:0;top:0" width="723" height="431" viewBox="0 0 723 431"><defs><filter id="sf" x="-5%" y="-5%" width="110%" height="110%"><feGaussianBlur stdDeviation="0.35"/></filter></defs><g filter="url(#sf)"><path d="M337.6 71.8 C337.9 73.5 337.9 78.5 339.3 82.0 C340.7 85.5 343.3 89.0 346.0 92.5 C348.7 96.0 352.7 99.8 355.5 103.0 C358.3 106.2 360.8 108.5 363.0 111.4 C365.2 114.4 367.6 117.6 369.0 120.7 C370.4 123.8 370.8 126.5 371.3 130.0 C371.8 133.5 371.9 137.8 372.0 141.6 C372.1 145.4 372.1 149.9 372.2 153.0 C372.2 156.1 372.2 155.0 372.3 160.0 C372.4 165.0 372.4 176.7 372.5 183.2 C372.6 189.7 372.9 195.9 373.0 199.0 C373.1 202.1 373.1 199.7 373.0 201.5 C372.9 203.3 372.7 207.4 372.4 210.0 C372.1 212.6 371.9 214.5 371.3 217.0 C370.7 219.5 369.4 222.9 368.5 225.0 C367.6 227.1 367.6 227.1 366.0 229.6 C364.4 232.1 360.6 236.5 359.0 240.0 C357.4 243.5 356.8 247.7 356.7 250.5 C356.6 253.3 357.9 255.4 358.5 257.0 C359.1 258.6 359.1 259.0 360.0 260.0 C360.9 261.0 362.6 261.8 364.0 263.0 C365.4 264.2 367.1 265.5 368.3 267.0 C369.6 268.5 370.7 270.5 371.5 272.0 C372.3 273.5 372.7 274.7 373.0 276.2 C373.3 277.7 373.4 279.7 373.5 281.0 C373.6 282.3 373.5 282.8 373.5 284.0 C373.5 285.2 373.6 287.0 373.6 288.0 C373.6 289.0 373.5 286.5 373.6 290.2 C373.8 293.9 374.1 303.4 374.5 310.0 C374.9 316.6 375.4 324.8 375.7 329.6 C376.0 334.4 375.8 335.6 376.3 339.0 C376.9 342.4 377.6 346.5 379.0 350.0 C380.4 353.5 382.2 356.8 384.5 359.8 C386.8 362.8 390.1 366.0 392.9 368.2 C395.7 370.4 398.4 372.0 401.2 373.0 C404.0 374.0 407.2 374.2 409.6 374.4 C412.1 374.6 413.7 374.5 415.9 374.4 C418.1 374.3 420.2 373.9 422.8 374.0 C425.4 374.1 429.1 374.5 431.2 374.8 C433.3 375.1 434.3 375.5 435.4 375.8 C436.5 376.1 435.4 376.0 438.0 376.5 C440.6 377.0 446.5 378.5 450.7 378.6 C454.9 378.7 460.6 377.6 463.4 377.1 C466.2 376.6 465.9 375.9 467.5 375.5 C469.1 375.1 470.9 375.2 472.8 375.0 C474.7 374.8 477.3 374.5 479.0 374.5 C480.7 374.5 480.8 374.8 483.2 375.0 C485.6 375.2 490.6 376.3 493.7 376.0 C496.8 375.7 499.6 374.7 502.0 373.4 C504.4 372.1 506.6 370.1 508.3 368.2 C510.0 366.3 511.2 363.9 512.0 362.0 C512.8 360.1 512.6 359.4 513.0 356.7 C513.4 354.0 513.8 351.4 514.2 346.0 C514.6 340.6 515.0 329.8 515.2 324.0 C515.4 318.2 516.3 315.9 515.4 311.0 C514.5 306.1 512.6 298.2 510.0 294.6 C507.4 291.1 503.1 290.8 499.6 289.7 C496.1 288.6 492.6 288.4 489.0 288.2 C485.4 288.0 481.7 288.2 478.0 288.3 C474.3 288.4 470.1 288.2 467.0 289.0 C463.9 289.8 461.2 290.2 459.5 293.0 C457.8 295.8 457.2 302.2 457.0 306.0 C456.8 309.8 457.7 312.8 458.0 316.0 C458.3 319.2 459.1 322.0 458.7 325.5 C458.3 329.0 456.7 334.4 455.4 337.0 C454.1 339.6 453.1 340.0 450.7 341.0 C448.3 342.0 443.6 342.8 441.0 343.0 C438.4 343.2 437.5 342.8 435.4 342.4 C433.3 342.0 430.3 341.2 428.4 340.8 C426.5 340.4 425.9 340.5 424.0 340.0 C422.1 339.5 418.8 338.7 417.0 338.0 C415.2 337.3 414.6 336.8 413.5 336.0 C412.4 335.2 411.3 334.2 410.5 333.0 C409.7 331.8 409.1 330.3 408.5 329.0 C407.9 327.7 407.1 326.4 406.8 325.0 C406.5 323.6 406.5 322.1 406.6 320.3 C406.7 318.5 407.0 315.9 407.2 314.0 C407.4 312.1 407.1 310.7 407.7 308.7 C408.3 306.7 409.8 303.9 411.0 302.0 C412.2 300.1 412.9 299.8 414.7 297.0 C416.5 294.2 420.2 289.7 421.6 285.5 C423.0 281.3 423.7 275.9 423.3 271.6 C422.9 267.4 420.5 262.9 419.3 260.0 C418.1 257.1 417.1 257.1 416.0 254.0 C414.9 250.9 413.3 245.5 412.4 241.2 C411.5 236.9 410.8 231.2 410.7 228.0 C410.6 224.8 411.3 224.1 412.0 222.0 C412.7 219.9 413.9 217.4 414.7 215.7 C415.5 214.0 415.9 213.9 417.0 212.0 C418.1 210.1 420.4 208.0 421.6 204.0 C422.8 200.0 423.9 192.5 424.0 188.0 C424.1 183.5 423.3 180.5 422.5 177.0 C421.7 173.5 419.6 169.8 419.0 167.0 C418.4 164.2 418.4 163.5 419.0 160.0 C419.6 156.5 420.5 149.9 422.5 146.0 C424.5 142.1 428.8 138.4 431.0 136.5 C433.2 134.6 434.3 135.1 436.0 134.7 C437.7 134.2 439.1 133.9 441.0 133.8 C442.9 133.8 445.9 134.1 447.6 134.4 C449.3 134.7 449.9 135.1 451.0 135.5 C452.1 135.9 453.2 136.4 454.0 136.8 C454.8 137.2 455.2 137.4 455.8 137.7 C456.4 138.0 456.8 138.3 457.5 138.8 C458.2 139.3 458.4 139.2 460.0 140.6 C461.6 142.0 465.4 145.8 467.0 147.5 C468.6 149.2 468.6 149.0 469.5 150.5 C470.4 152.0 471.5 154.3 472.6 156.3 C473.7 158.3 475.4 160.9 476.3 162.5 C477.2 164.1 477.2 164.2 477.8 166.0 C478.4 167.8 479.6 169.4 480.0 173.0 C480.4 176.6 480.2 183.8 480.0 187.6 C479.8 191.4 479.3 193.6 479.0 196.0 C478.7 198.4 478.1 197.6 478.0 202.0 C477.9 206.4 477.4 217.4 478.7 222.6 C480.0 227.8 483.2 230.8 485.7 233.0 C488.2 235.2 490.7 236.2 493.8 236.0 C496.9 235.8 501.3 234.6 504.2 232.0 C507.1 229.4 509.6 224.0 511.2 220.3 C512.8 216.6 513.4 213.4 513.8 210.0 C514.1 206.6 513.5 202.1 513.3 200.0 C513.1 197.9 513.0 199.7 512.6 197.5 C512.2 195.3 511.1 189.6 511.0 187.0 C510.9 184.4 511.6 183.2 511.8 182.0 C512.0 180.8 511.9 182.0 512.3 180.0 C512.7 178.0 513.9 172.8 514.0 170.0 C514.1 167.2 513.2 165.1 512.8 163.0 C512.4 160.9 511.9 159.2 511.7 157.5 C511.5 155.8 511.6 154.8 511.8 153.0 C512.0 151.2 512.4 150.0 512.8 147.0 C513.2 144.0 514.1 139.2 514.0 135.0 C513.9 130.8 513.3 125.8 512.0 122.0 C510.7 118.2 508.3 115.0 506.0 112.3 C503.7 109.5 501.1 107.2 498.4 105.5 C495.7 103.8 494.2 102.7 490.0 102.1 C485.8 101.5 477.2 101.8 473.2 101.8 C469.2 101.8 468.4 101.9 466.0 102.0 C463.6 102.1 460.5 102.3 459.0 102.4 C457.5 102.5 457.2 102.6 456.8 102.6" fill="none" stroke="#0a14ff" stroke-width="2.4" stroke-linecap="butt" stroke-linejoin="round"/><polyline points="337.6,71.8 337.7,72.9 337.9,74.4 338.0,76.2 338.3,78.2 338.7,80.2 339.3,82.0 340.1,83.7 341.1,85.5 342.2,87.2 343.4,89.0 344.7,90.7 346.0,92.5 347.4,94.3 349.0,96.1 350.7,97.9 352.4,99.7 354.0,101.4 355.5,103.0 356.9,104.5 358.2,105.9 359.5,107.3 360.7,108.6 361.9,110.0 363.0,111.4" fill="none" stroke="#00c8ff" stroke-width="2.4" stroke-linejoin="round" stroke-linecap="round"/><polyline points="363.0,111.4 364.1,112.9 365.2,114.4 366.3,116.0 367.3,117.6 368.2,119.1 369.0,120.7" fill="none" stroke="#00f0b0" stroke-width="2.4" stroke-linejoin="round" stroke-linecap="round"/><polyline points="369.0,120.7 369.6,122.2 370.1,123.7 370.5,125.2 370.8,126.7 371.1,128.3 371.3,130.0" fill="none" stroke="#30ff10" stroke-width="2.4" stroke-linejoin="round" stroke-linecap="round"/><polyline points="371.3,130.0 371.5,131.8 371.7,133.7 371.8,135.7 371.9,137.7 371.9,139.7 372.0,141.6" fill="none" stroke="#00f0b0" stroke-width="2.4" stroke-linejoin="round" stroke-linecap="round"/><polyline points="372.0,141.6 372.1,143.6 372.1,145.6 372.1,147.6 372.2,149.5 372.2,151.4 372.2,153.0" fill="none" stroke="#00c8ff" stroke-width="2.4" stroke-linejoin="round" stroke-linecap="round"/><polyline points="372.2,153.0 372.2,154.2 372.2,155.1 372.2,155.8 372.3,156.6 372.3,157.9 372.3,160.0" fill="none" stroke="#0a8cff" stroke-width="2.4" stroke-linejoin="round" stroke-linecap="round"/><polyline points="372.3,160.0 372.3,163.0 372.3,166.8 372.4,171.1 372.4,175.4 372.4,179.6 372.5,183.2 372.6,186.4 372.7,189.5 372.8,192.4 372.9,195.0 372.9,197.2 373.0,199.0 373.0,200.1 373.1,200.6 373.1,200.7 373.1,200.7 373.0,200.9 373.0,201.5" fill="none" stroke="#0a50ff" stroke-width="2.4" stroke-linejoin="round" stroke-linecap="round"/><polyline points="373.0,201.5 372.9,202.6 372.9,203.9 372.8,205.5 372.7,207.1 372.5,208.6 372.4,210.0" fill="none" stroke="#b0ff00" stroke-width="2.4" stroke-linejoin="round" stroke-linecap="round"/><polyline points="372.4,210.0 372.3,211.2 372.1,212.4 372.0,213.5 371.8,214.6 371.6,215.8 371.3,217.0" fill="none" stroke="#30ff10" stroke-width="2.4" stroke-linejoin="round" stroke-linecap="round"/><polyline points="371.3,217.0 370.9,218.3 370.5,219.7 370.0,221.2 369.5,222.5 369.0,223.9 368.5,225.0" fill="none" stroke="#00f0b0" stroke-width="2.4" stroke-linejoin="round" stroke-linecap="round"/><polyline points="368.5,225.0 368.1,225.9 367.8,226.6 367.5,227.1 367.2,227.8 366.7,228.5 366.0,229.6" fill="none" stroke="#00c8ff" stroke-width="2.4" stroke-linejoin="round" stroke-linecap="round"/><polyline points="360.0,260.0 360.5,260.5 361.1,261.0 361.8,261.4 362.6,261.9 363.3,262.4 364.0,263.0" fill="none" stroke="#00c8ff" stroke-width="2.4" stroke-linejoin="round" stroke-linecap="round"/><polyline points="364.0,263.0 364.7,263.6 365.5,264.2 366.2,264.9 366.9,265.6 367.6,266.3 368.3,267.0" fill="none" stroke="#30ff10" stroke-width="2.4" stroke-linejoin="round" stroke-linecap="round"/><polyline points="368.3,267.0 368.9,267.8 369.5,268.6 370.1,269.5 370.6,270.4 371.1,271.2 371.5,272.0 371.9,272.7 372.2,273.4 372.4,274.1 372.6,274.8 372.8,275.5 373.0,276.2 373.1,277.0 373.3,277.8 373.3,278.7 373.4,279.5 373.5,280.3 373.5,281.0" fill="none" stroke="#ffff00" stroke-width="2.4" stroke-linejoin="round" stroke-linecap="round"/><polyline points="373.5,281.0 373.5,281.6 373.5,282.1 373.5,282.6 373.5,283.0 373.5,283.5 373.5,284.0" fill="none" stroke="#ffa000" stroke-width="2.4" stroke-linejoin="round" stroke-linecap="round"/><polyline points="373.5,284.0 373.5,284.6 373.5,285.3 373.6,286.1 373.6,286.8 373.6,287.4 373.6,288.0" fill="none" stroke="#30ff10" stroke-width="2.4" stroke-linejoin="round" stroke-linecap="round"/><polyline points="373.6,288.0 373.6,288.3 373.6,288.2 373.6,288.1 373.5,288.2 373.5,288.8 373.6,290.2" fill="none" stroke="#00f0b0" stroke-width="2.4" stroke-linejoin="round" stroke-linecap="round"/><polyline points="374.5,310.0 374.7,313.4 374.9,316.9 375.1,320.5 375.3,323.8 375.5,326.9 375.7,329.6" fill="none" stroke="#0a50ff" stroke-width="2.4" stroke-linejoin="round" stroke-linecap="round"/><polyline points="409.6,374.4 410.8,374.5 411.8,374.5 412.8,374.5 413.8,374.5 414.8,374.4 415.9,374.4" fill="none" stroke="#00c8ff" stroke-width="2.4" stroke-linejoin="round" stroke-linecap="round"/><polyline points="415.9,374.4 417.0,374.3 418.1,374.3 419.2,374.1 420.4,374.1 421.6,374.0 422.8,374.0 424.2,374.1 425.6,374.2 427.2,374.3 428.7,374.5 430.0,374.6 431.2,374.8" fill="none" stroke="#30ff10" stroke-width="2.4" stroke-linejoin="round" stroke-linecap="round"/><polyline points="431.2,374.8 432.2,375.0 433.0,375.1 433.7,375.3 434.3,375.5 434.8,375.6 435.4,375.8" fill="none" stroke="#b0ff00" stroke-width="2.4" stroke-linejoin="round" stroke-linecap="round"/><polyline points="435.4,375.8 435.8,375.9 436.0,376.0 436.2,376.1 436.4,376.2 437.0,376.3 438.0,376.5" fill="none" stroke="#00c8ff" stroke-width="2.4" stroke-linejoin="round" stroke-linecap="round"/><polyline points="463.4,377.1 464.6,376.8 465.4,376.5 465.9,376.2 466.4,376.0 466.8,375.7 467.5,375.5" fill="none" stroke="#00c8ff" stroke-width="2.4" stroke-linejoin="round" stroke-linecap="round"/><polyline points="467.5,375.5 468.3,375.4 469.1,375.3 470.0,375.2 470.9,375.1 471.9,375.1 472.8,375.0" fill="none" stroke="#00f0b0" stroke-width="2.4" stroke-linejoin="round" stroke-linecap="round"/><polyline points="472.8,375.0 473.8,374.9 474.9,374.8 476.0,374.7 477.0,374.6 478.1,374.5 479.0,374.5" fill="none" stroke="#ffa000" stroke-width="2.4" stroke-linejoin="round" stroke-linecap="round"/><polyline points="479.0,374.5 479.7,374.5 480.3,374.6 480.8,374.7 481.4,374.8 482.2,374.9 483.2,375.0" fill="none" stroke="#b0ff00" stroke-width="2.4" stroke-linejoin="round" stroke-linecap="round"/><polyline points="514.2,346.0 514.4,342.9 514.6,339.2 514.8,335.1 514.9,331.1 515.1,327.3 515.2,324.0" fill="none" stroke="#0a50ff" stroke-width="2.4" stroke-linejoin="round" stroke-linecap="round"/><polyline points="489.0,288.2 487.2,288.1 485.4,288.1 483.5,288.1 481.7,288.2 479.8,288.2 478.0,288.3" fill="none" stroke="#00c8ff" stroke-width="2.4" stroke-linejoin="round" stroke-linecap="round"/><polyline points="457.0,306.0 457.0,307.8 457.1,309.6 457.3,311.2 457.6,312.8 457.8,314.4 458.0,316.0" fill="none" stroke="#00c8ff" stroke-width="2.4" stroke-linejoin="round" stroke-linecap="round"/><polyline points="458.0,316.0 458.2,317.6 458.4,319.1 458.6,320.7 458.8,322.2 458.8,323.8 458.7,325.5" fill="none" stroke="#30ff10" stroke-width="2.4" stroke-linejoin="round" stroke-linecap="round"/><polyline points="458.7,325.5 458.4,327.4 457.9,329.5 457.4,331.6 456.8,333.6 456.1,335.5 455.4,337.0" fill="none" stroke="#b0ff00" stroke-width="2.4" stroke-linejoin="round" stroke-linecap="round"/><polyline points="455.4,337.0 454.8,338.1 454.1,339.0 453.4,339.6 452.7,340.1 451.8,340.5 450.7,341.0 449.3,341.5 447.7,341.9 445.9,342.3 444.1,342.6 442.4,342.8 441.0,343.0 439.8,343.1 438.9,343.0 438.0,342.9 437.2,342.8 436.4,342.6 435.4,342.4" fill="none" stroke="#ffff00" stroke-width="2.4" stroke-linejoin="round" stroke-linecap="round"/><polyline points="435.4,342.4 434.3,342.2 433.1,341.9 431.8,341.6 430.6,341.3 429.4,341.0 428.4,340.8" fill="none" stroke="#00c8ff" stroke-width="2.4" stroke-linejoin="round" stroke-linecap="round"/><polyline points="424.0,340.0 422.9,339.7 421.7,339.4 420.4,339.1 419.2,338.7 418.0,338.3 417.0,338.0" fill="none" stroke="#30ff10" stroke-width="2.4" stroke-linejoin="round" stroke-linecap="round"/><polyline points="417.0,338.0 416.2,337.7 415.6,337.4 415.0,337.1 414.5,336.7 414.0,336.4 413.5,336.0" fill="none" stroke="#b0ff00" stroke-width="2.4" stroke-linejoin="round" stroke-linecap="round"/><polyline points="413.5,336.0 413.0,335.6 412.4,335.1 411.9,334.6 411.4,334.1 410.9,333.6 410.5,333.0" fill="none" stroke="#ff2000" stroke-width="2.4" stroke-linejoin="round" stroke-linecap="round"/><polyline points="410.5,333.0 410.1,332.4 409.7,331.7 409.4,331.1 409.1,330.4 408.8,329.7 408.5,329.0" fill="none" stroke="#ffa000" stroke-width="2.4" stroke-linejoin="round" stroke-linecap="round"/><polyline points="408.5,329.0 408.2,328.3 407.9,327.7 407.5,327.0 407.2,326.4 407.0,325.7 406.8,325.0 406.7,324.3 406.6,323.5 406.6,322.8 406.6,322.0 406.6,321.2 406.6,320.3" fill="none" stroke="#ffff00" stroke-width="2.4" stroke-linejoin="round" stroke-linecap="round"/><polyline points="406.6,320.3 406.7,319.3 406.7,318.3 406.9,317.2 407.0,316.1 407.1,315.0 407.2,314.0" fill="none" stroke="#ff2000" stroke-width="2.4" stroke-linejoin="round" stroke-linecap="round"/><polyline points="407.2,314.0 407.3,313.1 407.3,312.2 407.3,311.4 407.3,310.5 407.5,309.7 407.7,308.7" fill="none" stroke="#ffff00" stroke-width="2.4" stroke-linejoin="round" stroke-linecap="round"/><polyline points="407.7,308.7 408.1,307.6 408.6,306.5 409.1,305.3 409.8,304.2 410.4,303.0 411.0,302.0" fill="none" stroke="#30ff10" stroke-width="2.4" stroke-linejoin="round" stroke-linecap="round"/><polyline points="411.0,302.0 411.6,301.1 412.1,300.4 412.6,299.8 413.2,299.1 413.9,298.2 414.7,297.0" fill="none" stroke="#00f0b0" stroke-width="2.4" stroke-linejoin="round" stroke-linecap="round"/><polyline points="416.0,254.0 415.4,252.3 414.8,250.3 414.1,248.1 413.5,245.7 412.9,243.4 412.4,241.2" fill="none" stroke="#00c8ff" stroke-width="2.4" stroke-linejoin="round" stroke-linecap="round"/><polyline points="412.4,241.2 412.0,238.9 411.6,236.6 411.2,234.2 411.0,231.9 410.8,229.8 410.7,228.0" fill="none" stroke="#30ff10" stroke-width="2.4" stroke-linejoin="round" stroke-linecap="round"/><polyline points="410.7,228.0 410.7,226.6 410.9,225.5 411.1,224.6 411.4,223.8 411.7,222.9 412.0,222.0" fill="none" stroke="#ff2000" stroke-width="2.4" stroke-linejoin="round" stroke-linecap="round"/><polyline points="412.0,222.0 412.4,220.9 412.8,219.8 413.3,218.7 413.8,217.6 414.3,216.6 414.7,215.7" fill="none" stroke="#ffff00" stroke-width="2.4" stroke-linejoin="round" stroke-linecap="round"/><polyline points="414.7,215.7 415.1,215.0 415.4,214.4 415.7,214.0 416.1,213.5 416.5,212.8 417.0,212.0" fill="none" stroke="#30ff10" stroke-width="2.4" stroke-linejoin="round" stroke-linecap="round"/><polyline points="417.0,212.0 417.7,211.0 418.4,209.9 419.3,208.8 420.1,207.4 420.9,205.8 421.6,204.0" fill="none" stroke="#00c8ff" stroke-width="2.4" stroke-linejoin="round" stroke-linecap="round"/><polyline points="422.5,177.0 422.0,175.2 421.4,173.5 420.7,171.8 420.0,170.1 419.4,168.5 419.0,167.0" fill="none" stroke="#00c8ff" stroke-width="2.4" stroke-linejoin="round" stroke-linecap="round"/><polyline points="419.0,167.0 418.8,165.7 418.6,164.7 418.6,163.8 418.6,162.7 418.8,161.5 419.0,160.0" fill="none" stroke="#00f0b0" stroke-width="2.4" stroke-linejoin="round" stroke-linecap="round"/><polyline points="419.0,160.0 419.3,158.0 419.7,155.7 420.2,153.2 420.8,150.6 421.6,148.2 422.5,146.0" fill="none" stroke="#30ff10" stroke-width="2.4" stroke-linejoin="round" stroke-linecap="round"/><polyline points="422.5,146.0 423.7,144.1 425.1,142.2 426.7,140.5 428.2,138.9 429.7,137.6 431.0,136.5" fill="none" stroke="#b0ff00" stroke-width="2.4" stroke-linejoin="round" stroke-linecap="round"/><polyline points="431.0,136.5 432.0,135.7 432.9,135.3 433.7,135.1 434.5,134.9 435.2,134.9 436.0,134.7" fill="none" stroke="#ffff00" stroke-width="2.4" stroke-linejoin="round" stroke-linecap="round"/><polyline points="436.0,134.7 436.8,134.5 437.6,134.3 438.4,134.1 439.2,134.0 440.1,133.9 441.0,133.8" fill="none" stroke="#ffa000" stroke-width="2.4" stroke-linejoin="round" stroke-linecap="round"/><polyline points="441.0,133.8 442.0,133.8 443.2,133.9 444.4,134.0 445.6,134.1 446.7,134.3 447.6,134.4" fill="none" stroke="#ffff00" stroke-width="2.4" stroke-linejoin="round" stroke-linecap="round"/><polyline points="447.6,134.4 448.4,134.6 449.0,134.7 449.5,134.9 450.0,135.1 450.5,135.3 451.0,135.5" fill="none" stroke="#ffa000" stroke-width="2.4" stroke-linejoin="round" stroke-linecap="round"/><polyline points="451.0,135.5 451.5,135.7 452.1,135.9 452.6,136.2 453.1,136.4 453.6,136.6 454.0,136.8" fill="none" stroke="#ffff00" stroke-width="2.4" stroke-linejoin="round" stroke-linecap="round"/><polyline points="454.0,136.8 454.4,137.0 454.7,137.1 455.0,137.3 455.3,137.4 455.5,137.5 455.8,137.7" fill="none" stroke="#00f0b0" stroke-width="2.4" stroke-linejoin="round" stroke-linecap="round"/><polyline points="455.8,137.7 456.1,137.9 456.3,138.0 456.6,138.2 456.9,138.4 457.2,138.6 457.5,138.8" fill="none" stroke="#ffa000" stroke-width="2.4" stroke-linejoin="round" stroke-linecap="round"/><polyline points="457.5,138.8 457.8,139.0 458.1,139.2 458.4,139.3 458.8,139.6 459.3,140.0 460.0,140.6 461.0,141.5 462.2,142.7 463.5,144.0 464.8,145.3 466.0,146.5 467.0,147.5" fill="none" stroke="#ffff00" stroke-width="2.4" stroke-linejoin="round" stroke-linecap="round"/><polyline points="467.0,147.5 467.7,148.2 468.1,148.7 468.5,149.1 468.8,149.4 469.1,149.9 469.5,150.5" fill="none" stroke="#00f0b0" stroke-width="2.4" stroke-linejoin="round" stroke-linecap="round"/><polyline points="469.5,150.5 470.0,151.3 470.5,152.2 471.0,153.2 471.5,154.2 472.0,155.3 472.6,156.3 473.2,157.3 473.9,158.4 474.6,159.5 475.2,160.6 475.8,161.6 476.3,162.5" fill="none" stroke="#b0ff00" stroke-width="2.4" stroke-linejoin="round" stroke-linecap="round"/><polyline points="476.3,162.5 476.7,163.2 476.9,163.7 477.1,164.2 477.3,164.7 477.5,165.2 477.8,166.0" fill="none" stroke="#ffa000" stroke-width="2.4" stroke-linejoin="round" stroke-linecap="round"/><polyline points="477.8,166.0 478.2,166.9 478.6,167.8 479.0,168.8 479.4,170.0 479.8,171.4 480.0,173.0" fill="none" stroke="#b0ff00" stroke-width="2.4" stroke-linejoin="round" stroke-linecap="round"/><polyline points="480.0,173.0 480.1,175.1 480.2,177.5 480.2,180.2 480.2,182.9 480.1,185.4 480.0,187.6" fill="none" stroke="#30ff10" stroke-width="2.4" stroke-linejoin="round" stroke-linecap="round"/><polyline points="480.0,187.6 479.9,189.4 479.7,190.9 479.6,192.3 479.4,193.6 479.2,194.8 479.0,196.0" fill="none" stroke="#00f0b0" stroke-width="2.4" stroke-linejoin="round" stroke-linecap="round"/><polyline points="479.0,196.0 478.8,197.0 478.6,197.6 478.4,198.2 478.2,199.0 478.1,200.2 478.0,202.0" fill="none" stroke="#00c8ff" stroke-width="2.4" stroke-linejoin="round" stroke-linecap="round"/><polyline points="513.3,200.0 513.2,199.2 513.1,198.9 513.0,198.8 512.9,198.6 512.8,198.3 512.6,197.5" fill="none" stroke="#00c8ff" stroke-width="2.4" stroke-linejoin="round" stroke-linecap="round"/><polyline points="512.6,197.5 512.4,196.1 512.0,194.4 511.7,192.4 511.4,190.4 511.1,188.5 511.0,187.0" fill="none" stroke="#b0ff00" stroke-width="2.4" stroke-linejoin="round" stroke-linecap="round"/><polyline points="511.0,187.0 511.0,185.8 511.1,184.8 511.3,184.0 511.5,183.2 511.7,182.6 511.8,182.0" fill="none" stroke="#30ff10" stroke-width="2.4" stroke-linejoin="round" stroke-linecap="round"/><polyline points="511.8,182.0 511.9,181.6 511.9,181.4 512.0,181.3 512.1,181.1 512.2,180.8 512.3,180.0" fill="none" stroke="#ff2000" stroke-width="2.4" stroke-linejoin="round" stroke-linecap="round"/><polyline points="512.8,163.0 512.6,162.0 512.4,161.0 512.2,160.1 512.0,159.2 511.8,158.3 511.7,157.5" fill="none" stroke="#30ff10" stroke-width="2.4" stroke-linejoin="round" stroke-linecap="round"/><polyline points="511.7,157.5 511.6,156.7 511.6,156.0 511.6,155.3 511.7,154.6 511.7,153.8 511.8,153.0" fill="none" stroke="#ff2000" stroke-width="2.4" stroke-linejoin="round" stroke-linecap="round"/><polyline points="511.8,153.0 511.9,152.2 512.1,151.3 512.2,150.5 512.4,149.5 512.6,148.4 512.8,147.0" fill="none" stroke="#30ff10" stroke-width="2.4" stroke-linejoin="round" stroke-linecap="round"/><polyline points="473.2,101.8 471.4,101.8 470.1,101.8 469.0,101.9 468.0,101.9 467.1,101.9 466.0,102.0" fill="none" stroke="#00c8ff" stroke-width="2.4" stroke-linejoin="round" stroke-linecap="round"/><polyline points="466.0,102.0 464.8,102.1 463.5,102.1 462.2,102.2 461.0,102.3 459.9,102.3 459.0,102.4" fill="none" stroke="#0a50ff" stroke-width="2.4" stroke-linejoin="round" stroke-linecap="round"/><polyline points="459.0,102.4 458.3,102.4 457.8,102.5 457.5,102.5 457.2,102.6 457.0,102.6 456.8,102.6" fill="none" stroke="#30ff10" stroke-width="2.4" stroke-linejoin="round" stroke-linecap="round"/></g><path d="M365.8 298.4H381.2" stroke="#0a10f8" stroke-width="1.4"/></svg>
<!-- lap box -->
<div class="a" style="left:641px;top:36.8px;width:76.3px;height:9px;border:1px solid #1818ff"></div>
<!-- minimap -->
<div class="a" style="left:132.4px;top:347px;width:105.3px;height:68.2px;background:#6e6ec4"></div>
<svg class="a" style="left:0;top:0" width="723" height="431" viewBox="0 0 723 431"><g transform="translate(108.34 340.22) scale(0.180)"><path d="M337.6 71.8 C337.9 73.5 337.9 78.5 339.3 82.0 C340.7 85.5 343.3 89.0 346.0 92.5 C348.7 96.0 352.7 99.8 355.5 103.0 C358.3 106.2 360.8 108.5 363.0 111.4 C365.2 114.4 367.6 117.6 369.0 120.7 C370.4 123.8 370.8 126.5 371.3 130.0 C371.8 133.5 371.9 137.8 372.0 141.6 C372.1 145.4 372.1 149.9 372.2 153.0 C372.2 156.1 372.2 155.0 372.3 160.0 C372.4 165.0 372.4 176.7 372.5 183.2 C372.6 189.7 372.9 195.9 373.0 199.0 C373.1 202.1 373.1 199.7 373.0 201.5 C372.9 203.3 372.7 207.4 372.4 210.0 C372.1 212.6 371.9 214.5 371.3 217.0 C370.7 219.5 369.4 222.9 368.5 225.0 C367.6 227.1 367.6 227.1 366.0 229.6 C364.4 232.1 360.6 236.5 359.0 240.0 C357.4 243.5 356.8 247.7 356.7 250.5 C356.6 253.3 357.9 255.4 358.5 257.0 C359.1 258.6 359.1 259.0 360.0 260.0 C360.9 261.0 362.6 261.8 364.0 263.0 C365.4 264.2 367.1 265.5 368.3 267.0 C369.6 268.5 370.7 270.5 371.5 272.0 C372.3 273.5 372.7 274.7 373.0 276.2 C373.3 277.7 373.4 279.7 373.5 281.0 C373.6 282.3 373.5 282.8 373.5 284.0 C373.5 285.2 373.6 287.0 373.6 288.0 C373.6 289.0 373.5 286.5 373.6 290.2 C373.8 293.9 374.1 303.4 374.5 310.0 C374.9 316.6 375.4 324.8 375.7 329.6 C376.0 334.4 375.8 335.6 376.3 339.0 C376.9 342.4 377.6 346.5 379.0 350.0 C380.4 353.5 382.2 356.8 384.5 359.8 C386.8 362.8 390.1 366.0 392.9 368.2 C395.7 370.4 398.4 372.0 401.2 373.0 C404.0 374.0 407.2 374.2 409.6 374.4 C412.1 374.6 413.7 374.5 415.9 374.4 C418.1 374.3 420.2 373.9 422.8 374.0 C425.4 374.1 429.1 374.5 431.2 374.8 C433.3 375.1 434.3 375.5 435.4 375.8 C436.5 376.1 435.4 376.0 438.0 376.5 C440.6 377.0 446.5 378.5 450.7 378.6 C454.9 378.7 460.6 377.6 463.4 377.1 C466.2 376.6 465.9 375.9 467.5 375.5 C469.1 375.1 470.9 375.2 472.8 375.0 C474.7 374.8 477.3 374.5 479.0 374.5 C480.7 374.5 480.8 374.8 483.2 375.0 C485.6 375.2 490.6 376.3 493.7 376.0 C496.8 375.7 499.6 374.7 502.0 373.4 C504.4 372.1 506.6 370.1 508.3 368.2 C510.0 366.3 511.2 363.9 512.0 362.0 C512.8 360.1 512.6 359.4 513.0 356.7 C513.4 354.0 513.8 351.4 514.2 346.0 C514.6 340.6 515.0 329.8 515.2 324.0 C515.4 318.2 516.3 315.9 515.4 311.0 C514.5 306.1 512.6 298.2 510.0 294.6 C507.4 291.1 503.1 290.8 499.6 289.7 C496.1 288.6 492.6 288.4 489.0 288.2 C485.4 288.0 481.7 288.2 478.0 288.3 C474.3 288.4 470.1 288.2 467.0 289.0 C463.9 289.8 461.2 290.2 459.5 293.0 C457.8 295.8 457.2 302.2 457.0 306.0 C456.8 309.8 457.7 312.8 458.0 316.0 C458.3 319.2 459.1 322.0 458.7 325.5 C458.3 329.0 456.7 334.4 455.4 337.0 C454.1 339.6 453.1 340.0 450.7 341.0 C448.3 342.0 443.6 342.8 441.0 343.0 C438.4 343.2 437.5 342.8 435.4 342.4 C433.3 342.0 430.3 341.2 428.4 340.8 C426.5 340.4 425.9 340.5 424.0 340.0 C422.1 339.5 418.8 338.7 417.0 338.0 C415.2 337.3 414.6 336.8 413.5 336.0 C412.4 335.2 411.3 334.2 410.5 333.0 C409.7 331.8 409.1 330.3 408.5 329.0 C407.9 327.7 407.1 326.4 406.8 325.0 C406.5 323.6 406.5 322.1 406.6 320.3 C406.7 318.5 407.0 315.9 407.2 314.0 C407.4 312.1 407.1 310.7 407.7 308.7 C408.3 306.7 409.8 303.9 411.0 302.0 C412.2 300.1 412.9 299.8 414.7 297.0 C416.5 294.2 420.2 289.7 421.6 285.5 C423.0 281.3 423.7 275.9 423.3 271.6 C422.9 267.4 420.5 262.9 419.3 260.0 C418.1 257.1 417.1 257.1 416.0 254.0 C414.9 250.9 413.3 245.5 412.4 241.2 C411.5 236.9 410.8 231.2 410.7 228.0 C410.6 224.8 411.3 224.1 412.0 222.0 C412.7 219.9 413.9 217.4 414.7 215.7 C415.5 214.0 415.9 213.9 417.0 212.0 C418.1 210.1 420.4 208.0 421.6 204.0 C422.8 200.0 423.9 192.5 424.0 188.0 C424.1 183.5 423.3 180.5 422.5 177.0 C421.7 173.5 419.6 169.8 419.0 167.0 C418.4 164.2 418.4 163.5 419.0 160.0 C419.6 156.5 420.5 149.9 422.5 146.0 C424.5 142.1 428.8 138.4 431.0 136.5 C433.2 134.6 434.3 135.1 436.0 134.7 C437.7 134.2 439.1 133.9 441.0 133.8 C442.9 133.8 445.9 134.1 447.6 134.4 C449.3 134.7 449.9 135.1 451.0 135.5 C452.1 135.9 453.2 136.4 454.0 136.8 C454.8 137.2 455.2 137.4 455.8 137.7 C456.4 138.0 456.8 138.3 457.5 138.8 C458.2 139.3 458.4 139.2 460.0 140.6 C461.6 142.0 465.4 145.8 467.0 147.5 C468.6 149.2 468.6 149.0 469.5 150.5 C470.4 152.0 471.5 154.3 472.6 156.3 C473.7 158.3 475.4 160.9 476.3 162.5 C477.2 164.1 477.2 164.2 477.8 166.0 C478.4 167.8 479.6 169.4 480.0 173.0 C480.4 176.6 480.2 183.8 480.0 187.6 C479.8 191.4 479.3 193.6 479.0 196.0 C478.7 198.4 478.1 197.6 478.0 202.0 C477.9 206.4 477.4 217.4 478.7 222.6 C480.0 227.8 483.2 230.8 485.7 233.0 C488.2 235.2 490.7 236.2 493.8 236.0 C496.9 235.8 501.3 234.6 504.2 232.0 C507.1 229.4 509.6 224.0 511.2 220.3 C512.8 216.6 513.4 213.4 513.8 210.0 C514.1 206.6 513.5 202.1 513.3 200.0 C513.1 197.9 513.0 199.7 512.6 197.5 C512.2 195.3 511.1 189.6 511.0 187.0 C510.9 184.4 511.6 183.2 511.8 182.0 C512.0 180.8 511.9 182.0 512.3 180.0 C512.7 178.0 513.9 172.8 514.0 170.0 C514.1 167.2 513.2 165.1 512.8 163.0 C512.4 160.9 511.9 159.2 511.7 157.5 C511.5 155.8 511.6 154.8 511.8 153.0 C512.0 151.2 512.4 150.0 512.8 147.0 C513.2 144.0 514.1 139.2 514.0 135.0 C513.9 130.8 513.3 125.8 512.0 122.0 C510.7 118.2 508.3 115.0 506.0 112.3 C503.7 109.5 501.1 107.2 498.4 105.5 C495.7 103.8 494.2 102.7 490.0 102.1 C485.8 101.5 477.2 101.8 473.2 101.8 C469.2 101.8 468.4 101.9 466.0 102.0 C463.6 102.1 460.5 102.3 459.0 102.4 C457.5 102.5 457.2 102.6 456.8 102.6" fill="none" stroke="#a8a8f0" stroke-width="3.89"/></g><path d="M188.1 354v30.6M188.1 384.6h31" stroke="#9c9cf0" stroke-width="1"/><path d="M185.6 354.5l2.5-7 2.5 7z" fill="#9c9cf0"/><path d="M217.5 381.6l9 3-9 3z" fill="#9c9cf0"/><circle cx="188.1" cy="384.6" r="2" fill="#9c9cf0"/></svg>
<!-- scale -->
<svg class="a" style="left:0;top:0" width="723" height="431" viewBox="0 0 723 431"><path d="M605.3 408.8H712.1M605.8 408.2v4.5M711.6 408.2v4.5" stroke="#e8e800" stroke-width="1.1" fill="none"/><path d="M619.0 408.8v1.6" stroke="#e8e800" stroke-width="1"/><path d="M632.4 408.8v3.4" stroke="#e8e800" stroke-width="1"/><path d="M645.7 408.8v1.6" stroke="#e8e800" stroke-width="1"/><path d="M659.1 408.8v3.4" stroke="#e8e800" stroke-width="1"/><path d="M672.4 408.8v1.6" stroke="#e8e800" stroke-width="1"/><path d="M685.8 408.8v3.4" stroke="#e8e800" stroke-width="1"/><path d="M698.7 408.8v1.6" stroke="#e8e800" stroke-width="1"/></svg>
<!-- bottom tabs -->
<div class="a" style="left:126px;top:419px;width:597px;height:1.2px;background:#c4c4c4"></div>
<div class="a" style="left:126px;top:420px;width:597px;height:11px;background:#f0f0f0"></div>
<div class="a" style="left:128.3px;top:420.3px;width:50.0px;height:9.6px;background:#f2f2f2;border-left:1px solid #fff;border-right:1px solid #a8a8a8;border-bottom:1px solid #8a8a8a"></div>
<div class="a" style="left:179.1px;top:420.3px;width:48.2px;height:9.6px;background:#f2f2f2;border-left:1px solid #fff;border-right:1px solid #a8a8a8;border-bottom:1px solid #8a8a8a"></div>
<div class="a" style="left:227.9px;top:420.3px;width:60.8px;height:9.6px;background:#f2f2f2;border-left:1px solid #fff;border-right:1px solid #a8a8a8;border-bottom:1px solid #8a8a8a"></div>
<div class="a" style="left:290px;top:419.9px;width:33.5px;height:10.2px;background:#fff;border-left:1px solid #a0a0a0;border-right:1px solid #8a8a8a;border-bottom:1px solid #8a8a8a"></div>
<div class="a" style="left:130.4px;top:424.4px;width:7px;height:4.2px;background:#f0f000;border:0.5px solid #b0a000"></div>
<div class="a" style="left:133.3px;top:422px;width:5px;height:5.4px;background:#f4f4f4;border:0.8px solid #666"></div>
<div class="a" style="left:130.6px;top:429.3px;width:6px;height:1.7px;background:#777"></div>
<div class="a" style="left:182.9px;top:424.4px;width:7px;height:4.2px;background:#f0f000;border:0.5px solid #b0a000"></div>
<div class="a" style="left:185.8px;top:422px;width:5px;height:5.4px;background:#f4f4f4;border:0.8px solid #666"></div>
<div class="a" style="left:183.1px;top:429.3px;width:6px;height:1.7px;background:#777"></div>
<svg class="a" style="left:231px;top:422px" width="9" height="8" viewBox="0 0 9 8"><rect x=".5" y=".5" width="8" height="6.5" fill="#fff" stroke="#777" stroke-width=".6"/><path d="M1 7L7.5 1" stroke="#111" stroke-width="1.6"/><path d="M1.5 6.3L7 1.3" stroke="#e03030" stroke-width=".5"/></svg>
<svg class="a" style="left:282.5px;top:422.8px" width="5" height="4" viewBox="0 0 5 4"><path d="M.5 .3L4.5 3.7M4.5 .3L.5 3.7" stroke="#999" stroke-width=".9"/></svg>
<svg class="a" style="left:291.6px;top:420.3px" width="8.3" height="7.9" viewBox="0 0 9 8"><rect width="9" height="8" fill="#f01010"/><path d="M2 1.8h5M1.8 6.2h5M6.5 2L2.5 6" stroke="#2a2a50" stroke-width="1.1" fill="none"/><circle cx="3" cy="3.5" r=".8" fill="#3a5a9a"/></svg>
<svg class="a" style="left:316.9px;top:421px" width="5" height="4" viewBox="0 0 5 4"><path d="M.5 .3L4.5 3.7M4.5 .3L.5 3.7" stroke="#999" stroke-width=".9"/></svg>
<div id="ft0" class="t" style="left:11.10px;top:2.14px;font-size:8px;color:#2a2a2a;transform:scaleX(0.708);transform-origin:0 0;">RS2Analysis 2.40.00 - [Gps]</div>
<div id="ft1" class="t" style="left:14.90px;top:12.73px;font-size:7px;color:#282828;transform:scaleX(0.789);transform-origin:0 0;">File</div>
<div id="ft2" class="t" style="left:31.00px;top:12.73px;font-size:7px;color:#282828;transform:scaleX(0.818);transform-origin:0 0;">Data</div>
<div id="ft3" class="t" style="left:49.80px;top:12.73px;font-size:7px;color:#282828;transform:scaleX(0.877);transform-origin:0 0;">View</div>
<div id="ft4" class="t" style="left:70.00px;top:12.73px;font-size:7px;color:#282828;transform:scaleX(0.851);transform-origin:0 0;">Map</div>
<div id="ft5" class="t" style="left:89.00px;top:12.73px;font-size:7px;color:#282828;transform:scaleX(0.912);transform-origin:0 0;">Modify</div>
<div id="ft6" class="t" style="left:115.00px;top:12.73px;font-size:7px;color:#282828;transform:scaleX(0.883);transform-origin:0 0;">Options</div>
<div id="ft7" class="t" style="left:142.70px;top:12.73px;font-size:7px;color:#282828;transform:scaleX(0.750);transform-origin:0 0;">GPS</div>
<div id="ft8" class="t" style="left:161.00px;top:12.73px;font-size:7px;color:#282828;transform:scaleX(0.805);transform-origin:0 0;">Race Studio 2</div>
<div id="ft9" class="t" style="left:203.30px;top:12.73px;font-size:7px;color:#282828;transform:scaleX(0.887);transform-origin:0 0;">Window</div>
<div id="ft10" class="t" style="left:232.00px;top:12.73px;font-size:7px;color:#282828;transform:scaleX(0.870);transform-origin:0 0;">?</div>
<div id="ft11" class="t" style="left:2.40px;top:35.47px;font-size:6.5px;color:#6b7f95;transform:scaleX(0.819);transform-origin:0 0;">Measures and laps</div>
<div id="ft12" class="t" style="left:6.30px;top:45.47px;font-size:6.5px;color:#223;transform:scaleX(0.795);transform-origin:0 0;">Measures</div>
<div id="ft13" class="t" style="left:35.50px;top:46.37px;font-size:6.5px;color:#334;transform:scaleX(0.744);transform-origin:0 0;">Laps</div>
<div id="ft14" class="t" style="left:55.50px;top:46.37px;font-size:6.5px;color:#334;transform:scaleX(0.830);transform-origin:0 0;">Profiles</div>
<div id="ft15" class="t" style="left:11.10px;top:55.87px;font-size:6.5px;color:#222;transform:scaleX(0.784);transform-origin:0 0;">'Per Lap' Color</div>
<div id="ft16" class="t" style="left:68.00px;top:55.87px;font-size:6.5px;color:#222;transform:scaleX(0.830);transform-origin:0 0;">Sort Channels</div>
<div id="ft17" class="t" style="left:45.10px;top:65.47px;font-size:6.5px;color:#fff;transform:scaleX(0.835);transform-origin:0 0;">Tests Loaded:</div>
<div id="ft18" class="t" style="left:19.50px;top:73.57px;font-size:6.5px;color:#fff;transform:scaleX(0.825);transform-origin:0 0;">Solo Nats Day 1 2011 East Course_014</div>
<div id="ft19" class="t" style="left:4.60px;top:73.97px;font-size:6.5px;color:#444;transform:scaleX(0.921);transform-origin:0 0;">X</div>
<div id="ft20" class="t" style="left:56.60px;top:82.47px;font-size:6.5px;color:#222;transform:scaleX(0.850);transform-origin:0 0;">1 01.22.770</div>
<div id="ft21" class="t" style="left:49.20px;top:91.07px;font-size:6.5px;color:#fff;transform:scaleX(0.827);transform-origin:0 0;">Measures:</div>
<div id="ft22" class="t" style="left:36.20px;top:99.47px;font-size:6.5px;color:#fff;transform:scaleX(0.828);transform-origin:0 0;">Colors: Channel_1</div>
<div id="ft23" class="t" style="left:42.90px;top:108.07px;font-size:6.5px;color:#262626;transform:scaleX(0.829);transform-origin:0 0;">16.00</div>
<div id="ft24" class="t" style="left:59.55px;top:108.07px;font-size:6.5px;color:#262626;transform:scaleX(1.010);transform-origin:0 0;">-/-</div>
<div id="ft25" class="t" style="left:68.90px;top:108.07px;font-size:6.5px;color:#262626;transform:scaleX(0.854);transform-origin:0 0;">20.00</div>
<div id="ft26" class="t" style="left:42.90px;top:116.66px;font-size:6.5px;color:#262626;transform:scaleX(0.829);transform-origin:0 0;">12.00</div>
<div id="ft27" class="t" style="left:59.55px;top:116.66px;font-size:6.5px;color:#262626;transform:scaleX(1.010);transform-origin:0 0;">-/-</div>
<div id="ft28" class="t" style="left:68.90px;top:116.66px;font-size:6.5px;color:#262626;transform:scaleX(0.854);transform-origin:0 0;">16.00</div>
<div id="ft29" class="t" style="left:44.10px;top:125.25px;font-size:6.5px;color:#262626;transform:scaleX(0.861);transform-origin:0 0;">8.00</div>
<div id="ft30" class="t" style="left:58.05px;top:125.25px;font-size:6.5px;color:#262626;transform:scaleX(1.010);transform-origin:0 0;">-/-</div>
<div id="ft31" class="t" style="left:67.30px;top:125.25px;font-size:6.5px;color:#262626;transform:scaleX(0.854);transform-origin:0 0;">12.00</div>
<div id="ft32" class="t" style="left:45.70px;top:133.84px;font-size:6.5px;color:#262626;transform:scaleX(0.822);transform-origin:0 0;">4.00</div>
<div id="ft33" class="t" style="left:58.95px;top:133.84px;font-size:6.5px;color:#262626;transform:scaleX(1.010);transform-origin:0 0;">-/-</div>
<div id="ft34" class="t" style="left:68.00px;top:133.84px;font-size:6.5px;color:#262626;transform:scaleX(0.948);transform-origin:0 0;">8.00</div>
<div id="ft35" class="t" style="left:45.70px;top:142.43px;font-size:6.5px;color:#262626;transform:scaleX(0.877);transform-origin:0 0;">0.00</div>
<div id="ft36" class="t" style="left:59.85px;top:142.43px;font-size:6.5px;color:#262626;transform:scaleX(1.010);transform-origin:0 0;">-/-</div>
<div id="ft37" class="t" style="left:69.10px;top:142.43px;font-size:6.5px;color:#262626;transform:scaleX(0.861);transform-origin:0 0;">4.00</div>
<div id="ft38" class="t" style="left:44.50px;top:151.02px;font-size:6.5px;color:#262626;transform:scaleX(0.830);transform-origin:0 0;">-4.00</div>
<div id="ft39" class="t" style="left:60.10px;top:151.02px;font-size:6.5px;color:#262626;transform:scaleX(1.010);transform-origin:0 0;">-/-</div>
<div id="ft40" class="t" style="left:69.60px;top:151.02px;font-size:6.5px;color:#262626;transform:scaleX(0.877);transform-origin:0 0;">0.00</div>
<div id="ft41" class="t" style="left:43.60px;top:159.61px;font-size:6.5px;color:#262626;transform:scaleX(0.816);transform-origin:0 0;">-8.00</div>
<div id="ft42" class="t" style="left:58.95px;top:159.61px;font-size:6.5px;color:#262626;transform:scaleX(1.010);transform-origin:0 0;">-/-</div>
<div id="ft43" class="t" style="left:68.40px;top:159.61px;font-size:6.5px;color:#262626;transform:scaleX(0.897);transform-origin:0 0;">-4.00</div>
<div id="ft44" class="t" style="left:41.80px;top:168.20px;font-size:6.5px;color:#262626;transform:scaleX(0.852);transform-origin:0 0;">-12.00</div>
<div id="ft45" class="t" style="left:60.45px;top:168.20px;font-size:6.5px;color:#262626;transform:scaleX(1.010);transform-origin:0 0;">-/-</div>
<div id="ft46" class="t" style="left:69.60px;top:168.20px;font-size:6.5px;color:#262626;transform:scaleX(0.904);transform-origin:0 0;">-8.00</div>
<div id="ft47" class="t" style="left:40.60px;top:176.79px;font-size:6.5px;color:#262626;transform:scaleX(0.857);transform-origin:0 0;">-16.00</div>
<div id="ft48" class="t" style="left:58.95px;top:176.79px;font-size:6.5px;color:#262626;transform:scaleX(1.010);transform-origin:0 0;">-/-</div>
<div id="ft49" class="t" style="left:67.70px;top:176.79px;font-size:6.5px;color:#262626;transform:scaleX(0.884);transform-origin:0 0;">-12.00</div>
<div id="ft50" class="t" style="left:40.60px;top:185.38px;font-size:6.5px;color:#262626;transform:scaleX(0.857);transform-origin:0 0;">-20.00</div>
<div id="ft51" class="t" style="left:58.75px;top:185.38px;font-size:6.5px;color:#262626;transform:scaleX(1.010);transform-origin:0 0;">-/-</div>
<div id="ft52" class="t" style="left:67.30px;top:185.38px;font-size:6.5px;color:#262626;transform:scaleX(0.906);transform-origin:0 0;">-16.00</div>
<div id="ft53" class="t" style="left:604.10px;top:414.09px;font-size:5px;color:#d8d8d8;transform:scaleX(0.935);transform-origin:0 0;">0</div>
<div id="ft54" class="t" style="left:699.70px;top:414.09px;font-size:5px;color:#d8d8d8;transform:scaleX(1.183);transform-origin:0 0;">400 ft</div>
<div id="ft55" class="t" style="left:680.00px;top:39.21px;font-size:6px;color:#bcbcbc;transform:scaleX(0.887);transform-origin:0 0;">lap 1 -28.7 mm</div>
<div id="ft56" class="t" style="left:191.90px;top:350.45px;font-size:5.5px;color:#b4b4f0;transform:scaleX(1.063);transform-origin:0 0;">NORTH</div>
<div id="ft57" class="t" style="left:191.50px;top:380.03px;font-size:7px;color:#a0a0e8;transform:scaleX(0.976);transform-origin:0 0;">UP</div>
<div id="ft58" class="t" style="left:226.20px;top:380.15px;font-size:5.5px;color:#c4c0c8;transform:scaleX(1.044);transform-origin:0 0;">EAS</div>
<div id="ft59" class="t" style="left:237.70px;top:380.15px;font-size:5.5px;color:#e8e870;transform:scaleX(1.274);transform-origin:0 0;">T</div>
<div id="ft60" class="t" style="left:140.40px;top:422.27px;font-size:6.5px;color:#333;transform:scaleX(0.837);transform-origin:0 0;">Test Database</div>
<div id="ft61" class="t" style="left:192.40px;top:422.27px;font-size:6.5px;color:#333;transform:scaleX(0.812);transform-origin:0 0;">Lap Manager</div>
<div id="ft62" class="t" style="left:241.20px;top:422.27px;font-size:6.5px;color:#333;transform:scaleX(0.797);transform-origin:0 0;">Measures Graph</div>
<div id="ft63" class="t" style="left:302.80px;top:422.27px;font-size:6.5px;color:#333;transform:scaleX(0.839);transform-origin:0 0;">Gps</div>
</body></html>
